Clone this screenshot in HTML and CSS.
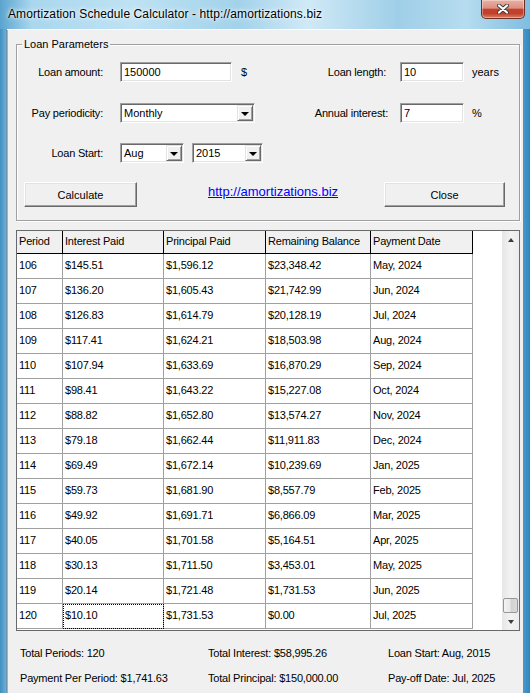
FILE: index.html
```html
<!DOCTYPE html>
<html lang="en">

<head>
    <meta charset="UTF-8">
    <title>Amortization Schedule Calculator</title>
    <link rel="stylesheet" href="styles.css">
</head>

<body>
    <div class="window">
        <div class="titlebar">
            <span class="title">Amortization Schedule Calculator - http://amortizations.biz</span>
            <div class="close-btn">
                <svg width="12" height="10" viewBox="0 0 12 10">
                    <path d="M2 1.5 L10 8.5 M10 1.5 L2 8.5" stroke="#3b3b3b" stroke-width="4" stroke-linecap="round" />
                    <path d="M2 1.5 L10 8.5 M10 1.5 L2 8.5" stroke="#fff" stroke-width="2.2" stroke-linecap="round" />
                </svg>
            </div>
        </div>

        <div class="client">
            <div class="group">
                <span class="group-title">Loan Parameters</span>

                <div class="row row-1">
                    <div class="half">
                        <label class="lbl">Loan amount:</label>
                        <div class="edit w-amount">150000</div>
                        <span class="unit unit-dollar">$</span>
                    </div>
                    <div class="half half-right">
                        <label class="lbl">Loan length:</label>
                        <div class="edit w-small">10</div>
                        <span class="unit">years</span>
                    </div>
                </div>

                <div class="row row-2">
                    <div class="half">
                        <label class="lbl">Pay periodicity:</label>
                        <div class="combo w-period">
                            <span class="combo-text">Monthly</span>
                            <span class="combo-btn"><i class="arrow-down"></i></span>
                        </div>
                    </div>
                    <div class="half half-right">
                        <label class="lbl lbl-interest">Annual interest:</label>
                        <div class="edit w-small">7</div>
                        <span class="unit">%</span>
                    </div>
                </div>

                <div class="row row-3">
                    <div class="half">
                        <label class="lbl">Loan Start:</label>
                        <div class="combo w-month">
                            <span class="combo-text">Aug</span>
                            <span class="combo-btn"><i class="arrow-down"></i></span>
                        </div>
                        <div class="combo w-year">
                            <span class="combo-text">2015</span>
                            <span class="combo-btn"><i class="arrow-down"></i></span>
                        </div>
                    </div>
                </div>

                <div class="row row-buttons">
                    <button class="btn btn-calc">Calculate</button>
                    <a class="site-link" href="#">http://amortizations.biz</a>
                    <button class="btn btn-close">Close</button>
                </div>
            </div>

            <div class="grid-view">
                <div class="grid-table">
                    <div class="hcell">Period</div>
                    <div class="hcell">Interest Paid</div>
                    <div class="hcell">Principal Paid</div>
                    <div class="hcell">Remaining Balance</div>
                    <div class="hcell">Payment Date</div>

                    <div class="cell">106</div><div class="cell">$145.51</div><div class="cell">$1,596.12</div><div class="cell">$23,348.42</div><div class="cell">May, 2024</div>
                    <div class="cell">107</div><div class="cell">$136.20</div><div class="cell">$1,605.43</div><div class="cell">$21,742.99</div><div class="cell">Jun, 2024</div>
                    <div class="cell">108</div><div class="cell">$126.83</div><div class="cell">$1,614.79</div><div class="cell">$20,128.19</div><div class="cell">Jul, 2024</div>
                    <div class="cell">109</div><div class="cell">$117.41</div><div class="cell">$1,624.21</div><div class="cell">$18,503.98</div><div class="cell">Aug, 2024</div>
                    <div class="cell">110</div><div class="cell">$107.94</div><div class="cell">$1,633.69</div><div class="cell">$16,870.29</div><div class="cell">Sep, 2024</div>
                    <div class="cell">111</div><div class="cell">$98.41</div><div class="cell">$1,643.22</div><div class="cell">$15,227.08</div><div class="cell">Oct, 2024</div>
                    <div class="cell">112</div><div class="cell">$88.82</div><div class="cell">$1,652.80</div><div class="cell">$13,574.27</div><div class="cell">Nov, 2024</div>
                    <div class="cell">113</div><div class="cell">$79.18</div><div class="cell">$1,662.44</div><div class="cell">$11,911.83</div><div class="cell">Dec, 2024</div>
                    <div class="cell">114</div><div class="cell">$69.49</div><div class="cell">$1,672.14</div><div class="cell">$10,239.69</div><div class="cell">Jan, 2025</div>
                    <div class="cell">115</div><div class="cell">$59.73</div><div class="cell">$1,681.90</div><div class="cell">$8,557.79</div><div class="cell">Feb, 2025</div>
                    <div class="cell">116</div><div class="cell">$49.92</div><div class="cell">$1,691.71</div><div class="cell">$6,866.09</div><div class="cell">Mar, 2025</div>
                    <div class="cell">117</div><div class="cell">$40.05</div><div class="cell">$1,701.58</div><div class="cell">$5,164.51</div><div class="cell">Apr, 2025</div>
                    <div class="cell">118</div><div class="cell">$30.13</div><div class="cell">$1,711.50</div><div class="cell">$3,453.01</div><div class="cell">May, 2025</div>
                    <div class="cell">119</div><div class="cell">$20.14</div><div class="cell">$1,721.48</div><div class="cell">$1,731.53</div><div class="cell">Jun, 2025</div>
                    <div class="cell">120</div><div class="cell cell-focus">$10.10</div><div class="cell">$1,731.53</div><div class="cell">$0.00</div><div class="cell">Jul, 2025</div>
                </div>

                <div class="grid-blank"></div>

                <div class="vscroll">
                    <div class="sb-btn"><i class="sb-arrow-up"></i></div>
                    <div class="sb-track"></div>
                    <div class="sb-thumb"></div>
                    <div class="sb-btn"><i class="sb-arrow-down"></i></div>
                </div>
            </div>

            <div class="totals">
                <span>Total Periods: 120</span>
                <span>Total Interest: $58,995.26</span>
                <span>Loan Start: Aug, 2015</span>
                <span>Payment Per Period: $1,741.63</span>
                <span>Total Principal: $150,000.00</span>
                <span>Pay-off Date: Jul, 2025</span>
            </div>
        </div>
    </div>
</body>

</html>
```

FILE: styles.css
```css
body {
    margin: 0;
    font-family: "Liberation Sans", Arial, sans-serif;
    font-size: 11px;
    color: #000;
    overflow: hidden;
}

.window {
    width: 530px;
    height: 693px;
    display: flex;
    flex-direction: column;
    padding: 0 7px 0 7px;
    box-sizing: border-box;
    background: linear-gradient(to right, #3f8fc0 0, #8cc8e6 2%, #b7def0 12%, #a6d3ea 35%, #cbe7f5 55%, #9fd0ea 75%, #7fc0e3 96%, #2f86bf 100%);
}

.titlebar {
    height: 29px;
    display: flex;
    align-items: flex-start;
    margin: 0 -7px;
    background: linear-gradient(to right, #5aa4cf 0, #a9d7ee 6%, #bfe2f3 25%, #a2d2ea 45%, #d0e9f6 58%, #9fcfe8 75%, #b6dcef 88%, #7fbde0 100%);
}

.title {
    padding: 7px 0 0 8px;
    font-size: 12px;
    letter-spacing: 0.1px;
    text-shadow: 0 0 6px #fff, 0 0 3px #fff;
}

.close-btn {
    margin-left: auto;
    margin-right: 5px;
    width: 44px;
    height: 19px;
    box-sizing: border-box;
    border: 1px solid #6e2f25;
    border-top: none;
    border-radius: 0 0 5px 5px;
    background: linear-gradient(to bottom, #eab1a4 0, #dc8f80 45%, #c5412c 52%, #c0412d 75%, #d98066 100%);
    box-shadow: inset 0 0 0 1px rgba(255, 255, 255, 0.35);
    display: flex;
    align-items: center;
    justify-content: center;
}

.client {
    flex: 1;
    background: #f0f0f0;
    border-top: 1px solid #fff;
    box-shadow: inset 1px 0 0 #9cb3c6, -1px 0 0 #6d93b2;
}

/* group box */

.group {
    position: relative;
    margin: 14px 3px 0 9px;
    height: 177px;
    box-sizing: border-box;
    border: 1px solid #a0a0a0;
    box-shadow: inset 1px 1px 0 #fff, 1px 1px 0 #fff;
    padding-top: 17px;
}

.group-title {
    position: absolute;
    top: -8px;
    left: 5px;
    padding: 0 2px;
    background: #f0f0f0;
    line-height: 14px;
}

.row {
    display: flex;
    height: 20px;
}

.row-1 {
    margin-bottom: 21px;
}

.row-2 {
    margin-bottom: 20px;
}

.row-3 {
    margin-bottom: 19px;
}

.half {
    display: flex;
    align-items: center;
    width: 283px;
}

.half-right {
    width: auto;
}

.lbl {
    width: 86px;
    margin-right: 17px;
    text-align: right;
    letter-spacing: -0.2px;
}

.half-right .lbl {
    margin-right: 14px;
}

.half-right .lbl-interest {
    width: 88px;
    margin-right: 12px;
}

.edit,
.combo {
    height: 20px;
    box-sizing: border-box;
    background: #fff;
    border: 1px solid;
    border-color: #a0a0a0 #fff #fff #a0a0a0;
    box-shadow: inset 1px 1px 0 #696969, inset -1px -1px 0 #e3e3e3;
    display: flex;
    align-items: center;
    padding-left: 3px;
    font-size: 11px;
}

.w-amount {
    width: 112px;
}

.w-small {
    width: 64px;
}

.w-period {
    width: 135px;
}

.w-month {
    width: 64px;
    margin-right: 8px;
}

.w-year {
    width: 71px;
}

.unit {
    margin-left: 8px;
}

.unit-dollar {
    margin-left: 9px;
}

.combo-text {
    flex: 1;
}

.combo-btn {
    width: 16px;
    height: 16px;
    margin-right: 1px;
    box-sizing: border-box;
    background: #f0f0f0;
    border: 1px solid;
    border-color: #e3e3e3 #696969 #696969 #e3e3e3;
    box-shadow: inset 1px 1px 0 #fff, inset -1px -1px 0 #a0a0a0;
    display: flex;
    align-items: center;
    justify-content: center;
}

.arrow-down {
    width: 0;
    height: 0;
    border-left: 4px solid transparent;
    border-right: 4px solid transparent;
    border-top: 4px solid #000;
    margin-top: 1px;
}

.row-buttons {
    height: 25px;
    align-items: center;
}

.btn {
    height: 25px;
    box-sizing: border-box;
    font-family: inherit;
    font-size: 11px;
    background: #f0f0f0;
    border: 1px solid;
    border-color: #fff #696969 #696969 #fff;
    box-shadow: inset -1px -1px 0 #a0a0a0, inset 1px 1px 0 #e3e3e3;
    padding: 0;
    color: #000;
}

.btn-calc {
    width: 113px;
    margin-left: 7px;
}

.site-link {
    margin-left: 71px;
    margin-top: -6px;
    font-size: 13px;
    color: #0000ff;
    text-decoration: underline;
}

.btn-close {
    width: 121px;
    margin-left: auto;
    margin-right: 14px;
}

/* data grid */

.grid-view {
    display: flex;
    margin: 9px 3px 0 9px;
    height: 401px;
    box-sizing: border-box;
    border: 1px solid #696969;
    background: #fff;
}

.grid-table {
    display: grid;
    grid-template-columns: 46px 101px 102px 105px 102px;
    grid-template-rows: 23px;
    grid-auto-rows: 25px;
    letter-spacing: -0.2px;
}

.hcell,
.cell {
    box-sizing: border-box;
    display: flex;
    align-items: center;
    padding-left: 2px;
    white-space: nowrap;
}

.hcell {
    background: #f0f0f0;
    border-right: 1px solid #000;
    border-bottom: 1px solid #000;
    padding-bottom: 2px;
}

.cell {
    border-right: 1px solid #a0a0a0;
    border-bottom: 1px solid #a0a0a0;
    padding-bottom: 2px;
}

.cell-focus {
    outline: 1px dotted #000;
    outline-offset: -1px;
}

.grid-blank {
    flex: 1;
}

.vscroll {
    width: 17px;
    display: flex;
    flex-direction: column;
    background: linear-gradient(to right, #e6e6e6, #f2f2f2 50%, #ececec);
}

.sb-btn {
    height: 17px;
    display: flex;
    align-items: center;
    justify-content: center;
}

.sb-arrow-up,
.sb-arrow-down {
    width: 0;
    height: 0;
    border-left: 3.5px solid transparent;
    border-right: 3.5px solid transparent;
}

.sb-arrow-up {
    border-bottom: 4px solid #3c3c3c;
}

.sb-arrow-down {
    border-top: 4px solid #3c3c3c;
}

.sb-track {
    flex: 1;
}

.sb-thumb {
    height: 15px;
    margin: 0 1px;
    box-sizing: border-box;
    border: 1px solid #979797;
    border-radius: 2px;
    background: linear-gradient(to right, #f4f4f4 0, #e8e8e8 45%, #d2d2d2 55%, #dadada 100%);
}

/* totals */

.totals {
    display: grid;
    grid-template-columns: 188px 180px 1fr;
    grid-auto-rows: 25px;
    align-items: center;
    margin-top: 9px;
    padding-left: 13px;
    letter-spacing: -0.2px;
}
```
